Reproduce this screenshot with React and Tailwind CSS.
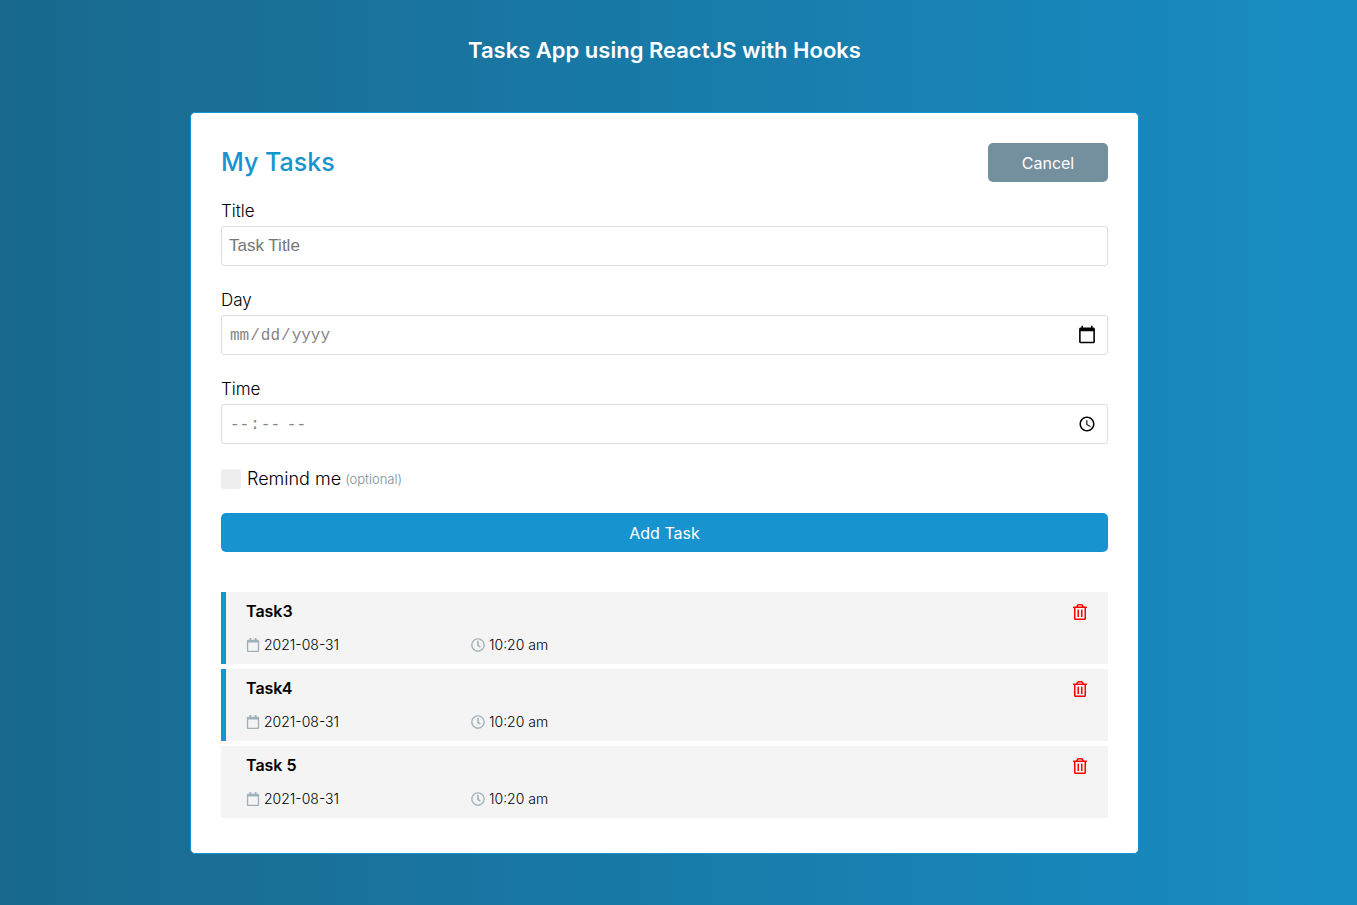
import { useState } from "react";
import { FaRegCalendar, FaRegClock, FaRegTrashAlt } from "react-icons/fa";

const tasks = [
  { id: 1, title: "Task3", day: "2021-08-31", time: "10:20 am", reminder: true },
  { id: 2, title: "Task4", day: "2021-08-31", time: "10:20 am", reminder: true },
  { id: 3, title: "Task 5", day: "2021-08-31", time: "10:20 am", reminder: false },
];

const inputClass =
  "mt-1 block h-10 w-full rounded-[3px] border border-[#dddddd] bg-white pl-[7px] outline-none placeholder:text-[#757575]";

const pickerClass =
  "pt-[2px] pr-2 font-['Liberation_Mono',monospace] text-base text-[#858585] [&::-webkit-calendar-picker-indicator]:mb-[2px]";

function Field({ id, label, children }) {
  return (
    <div className="mb-6">
      <label htmlFor={id} className="block text-[17px] leading-[21px] font-light">
        {label}
      </label>
      {children}
    </div>
  );
}

function Task({ task }) {
  return (
    <li
      className={`flex h-[72px] items-start justify-between border-l-[5px] bg-[#f4f4f4] pt-[7px] pr-5 pl-5 ${
        task.reminder ? "border-[#1794d0]" : "border-[#f4f4f4]"
      }`}
    >
      <div>
        <h3 className="text-base leading-6 font-semibold">{task.title}</h3>
        <div className="mt-3 flex text-sm leading-5 font-light">
          <p className="flex w-[225px] items-center gap-1">
            <FaRegCalendar className="size-[14px] text-[#9eb0b8]" />
            {task.day}
          </p>
          <p className="flex items-center gap-1">
            <FaRegClock className="size-[14px] text-[#9eb0b8]" />
            {task.time}
          </p>
        </div>
      </div>
      <button type="button" aria-label={`Delete ${task.title}`} className="mt-[5px] text-[#ff0000]">
        <FaRegTrashAlt className="size-4" />
      </button>
    </li>
  );
}

export default function App() {
  const [remind, setRemind] = useState(false);
  return (
    <div className="min-h-screen bg-linear-to-r from-[#19698e] to-[#178dc4] pt-9 pr-7 pb-[51px] font-[Inter,'Open_Sans',sans-serif] text-black">
      <h1 className="text-center text-[22px] leading-7 font-semibold text-white">
        Tasks App using ReactJS with Hooks
      </h1>
      <main className="mx-auto mt-12 max-w-[949px] rounded-[5px] border border-[#1794d0] bg-white px-[30px] pt-[30px] pb-[35px]">
        <header className="flex items-center justify-between">
          <h2 className="text-[25px] leading-[39px] font-medium text-[#1794d0]">My Tasks</h2>
          <button type="button" className="h-[39px] w-[120px] rounded-[5px] bg-[#748f9e] text-base text-white">
            Cancel
          </button>
        </header>
        <form className="mt-[19px]" onSubmit={(e) => e.preventDefault()}>
          <Field id="title" label="Title">
            <input
              id="title"
              type="text"
              placeholder="Task Title"
              className={`${inputClass} pr-[7px] font-['Liberation_Sans',sans-serif] text-[17px]`}
            />
          </Field>
          <Field id="day" label="Day">
            <input
              id="day"
              type="date"
              className={`${inputClass} ${pickerClass} [&::-webkit-calendar-picker-indicator]:size-5`}
            />
          </Field>
          <Field id="time" label="Time">
            <input
              id="time"
              type="time"
              className={`${inputClass} ${pickerClass} [&::-webkit-calendar-picker-indicator]:size-[18px]`}
            />
          </Field>
          <label className="flex h-[22px] items-center text-lg font-light">
            <input
              type="checkbox"
              checked={remind}
              onChange={(e) => setRemind(e.target.checked)}
              className="mr-[6px] size-5 appearance-none rounded-[3px] bg-[#eeeeee] checked:bg-[#1794d0]"
            />
            Remind me
            <small className="ml-1 pt-px text-[13px] text-[#748f9e]">(optional)</small>
          </label>
          <button
            type="submit"
            className="mt-[23px] h-[39px] w-full rounded-[5px] bg-[#1794d0] text-base text-white"
          >
            Add Task
          </button>
        </form>
        <ul className="mt-10 flex flex-col gap-[5px]">
          {tasks.map((task) => (
            <Task key={task.id} task={task} />
          ))}
        </ul>
      </main>
    </div>
  );
}
